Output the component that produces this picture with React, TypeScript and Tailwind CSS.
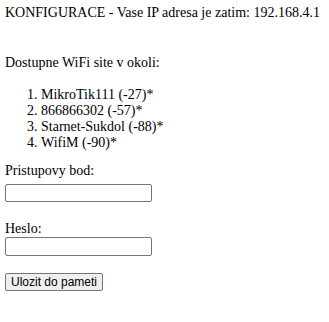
const networks = [
  'MikroTik111 (-27)*',
  '866866302 (-57)*',
  'Starnet-Sukdol (-88)*',
  'WifiM (-90)*',
];

export default function App() {
  return (
    <div className="w-[329px] h-[322px] bg-white text-black font-['Liberation_Serif',serif] text-[14px] leading-[16px] pl-[5px] pt-[5px]">
      <div className="h-[16px] whitespace-nowrap">KONFIGURACE - Vase IP adresa je zatim: 192.168.4.1</div>

      <div className="mt-[34px] h-[16px]">Dostupne WiFi site v okoli:</div>

      <ol className="mt-[15px] pl-[36px] list-decimal">
        {networks.map((n) => (
          <li key={n} className="h-[16px] leading-[17px]">{n}</li>
        ))}
      </ol>

      <form className="flex flex-col items-start">
        <label className="mt-[13px] h-[16px]">Pristupovy bod:</label>
        <input type="text" className="mt-[5px] w-[147px] h-[18px] border border-[#767676] rounded-[2px] bg-white" />

        <label className="mt-[19px] h-[16px]">Heslo:</label>
        <input type="password" className="mt-0 w-[147px] h-[19px] border border-[#767676] rounded-[2px] bg-white" />

        <button
          type="button"
          className="mt-[17px] w-[98px] h-[18px] border border-[#767676] rounded-[2px] bg-[#efefef] font-['Liberation_Sans',sans-serif] text-[12px] leading-[16px] text-black"
        >
          Ulozit do pameti
        </button>
      </form>
    </div>
  );
}
